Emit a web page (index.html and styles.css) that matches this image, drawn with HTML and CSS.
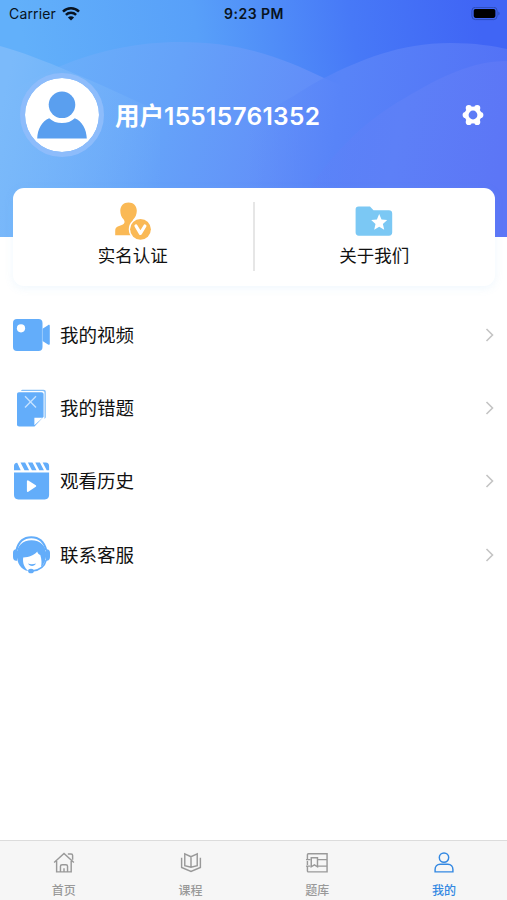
FILE: index.html
```html
<!DOCTYPE html>
<html lang="zh-CN">
<head>
<meta charset="utf-8">
<title>我的</title>
<link rel="stylesheet" href="styles.css">
</head>
<body>
<div class="app">
  <header class="hero">
    <svg class="waves" viewBox="0 0 507 237" preserveAspectRatio="none">
      <defs>
        <linearGradient id="sky" gradientUnits="userSpaceOnUse" x1="30" y1="90" x2="480" y2="20"><stop offset="0" stop-color="#62b0fa"/><stop offset=".38" stop-color="#58a0f9"/><stop offset=".72" stop-color="#4779f7"/><stop offset="1" stop-color="#4065f5"/></linearGradient>
        <linearGradient id="hill" gradientUnits="userSpaceOnUse" x1="0" y1="120" x2="340" y2="210"><stop offset="0" stop-color="#6cb3fa"/><stop offset=".45" stop-color="#65a2f9"/><stop offset="1" stop-color="#6085f8"/></linearGradient>
        <linearGradient id="right" gradientUnits="userSpaceOnUse" x1="250" y1="110" x2="500" y2="140"><stop offset="0" stop-color="#5c8cf9" stop-opacity="0"/><stop offset=".35" stop-color="#5884f8"/><stop offset="1" stop-color="#5372f6"/></linearGradient>
        <linearGradient id="front" gradientUnits="userSpaceOnUse" x1="290" y1="130" x2="500" y2="170"><stop offset="0" stop-color="#5f82f7" stop-opacity="0"/><stop offset=".5" stop-color="#5d80f7"/><stop offset="1" stop-color="#5c76f6"/></linearGradient>
        <linearGradient id="left" gradientUnits="userSpaceOnUse" x1="0" y1="110" x2="170" y2="150"><stop offset="0" stop-color="#7bbafa"/><stop offset="1" stop-color="#7bb4fa" stop-opacity="0"/></linearGradient>
      </defs>
      <path fill="url(#sky)" d="M0 0h507v237H0z"/>
      <path fill="url(#hill)" d="M0 100C30 78 94 42 180 42C245 42 286 60 324 78C350 90 375 96 405 98L507 120V237H0Z"/>
      <path fill="url(#right)" d="M250 120C290 100 306 87 324 78C360 60 400 43 450 43C475 43 494 46 507 49V237H250Z"/>
      <path fill="url(#front)" d="M280 237C320 160 365 120 405 98C440 77 472 61 507 61V237Z"/>
      <path fill="url(#left)" d="M0 46C40 57 95 82 160 112V237H0Z"/>
    </svg>
    <div class="status">
      <div class="carrier"><span>Carrier</span>
        <svg width="18" height="14" viewBox="0 0 18 14" fill="none" stroke="#081321" stroke-width="2.5"><path d="M1 4.600C5.500.2 12.500.2 17 4.600M3.900 7.900c2.900-2.800 7.300-2.800 10.200 0"/><path fill="#081321" stroke="none" d="M5.900 10.500c1.800-1.700 4.400-1.700 6.200 0L9 13.500z"/></svg>
      </div>
      <div class="clock">9:23 PM</div>
      <svg class="battery" width="30" height="14" viewBox="0 0 30 14"><rect x=".9" y=".3" width="25.200" height="12.300" rx="3.500" fill="none" stroke="#2c4cb4" stroke-width="1"/><rect x="2.700" y="2" width="21.700" height="8.900" rx="1.800"/><path d="M27.400 4.500c1.500.7 1.500 3.200 0 4z" fill="#2c4cb4"/></svg>
    </div>
    <div class="profile">
      <div class="avatar"><svg width="50" height="48" viewBox="0 0 50 48" fill="#5a9fef"><circle cx="25" cy="13.800" r="13.300"/><path d="M12.200 27.200C15.500 30.400 20 32.100 25 32.100s9.500-1.700 12.800-4.900C45 30.200 49.500 38 49.800 47.600H.2C.5 38 5 30.200 12.200 27.200z"/></svg></div>
      <div class="name">用户<span class="digits">15515761352</span></div>
      <svg class="gear" width="22" height="22" viewBox="-11 -11 22 22"><g fill="#fff"><circle r="8.600"/><circle cx="7.300" r="3.100"/><circle cx="-7.300" r="3.100"/><circle cx="4.200" cy="7" r="3.100"/><circle cx="-4.200" cy="7" r="3.100"/><circle cx="4.200" cy="-7" r="3.100"/><circle cx="-4.200" cy="-7" r="3.100"/></g><circle r="4.400" fill="#5c7bf6"/></svg>
    </div>
  </header>

  <section class="card">
    <div class="entry">
      <svg width="38" height="38" viewBox="0 0 38 38"><path fill="#fab955" d="M14.500.5c5 0 8.300 3.500 8.300 8.200 0 3.500-1.400 6.700-3.600 8.700-.8 1.600-.2 2.600 1.400 3.300L18 33.200H1.200v-4.300c0-2.400.8-3.800 3.200-4.700l4-1.500c1.900-.8 3-2.700 1.300-5.200C7.500 15.500 6.300 12.300 6.300 8.700 6.300 4 9.500.5 14.500.5z"/><circle cx="26.500" cy="27.300" r="11.700" fill="#fff"/><circle cx="26.500" cy="27.300" r="10.400" fill="#fab955"/><path d="m22 24 4.400 7.400 4.500-7.400" fill="none" stroke="#fff" stroke-width="3.200" stroke-linecap="round" stroke-linejoin="round"/></svg>
      <span>实名认证</span>
    </div>
    <div class="entry">
      <svg width="38" height="38" viewBox="0 0 38 38"><path fill="#7bc8f4" d="M3.500 4.500H15l3.500 3.800H34c2 0 3.200 1.200 3.200 3.200v19c0 2-1.200 3.200-3.200 3.200H3.800c-2 0-3.200-1.200-3.200-3.200v-23c0-1.800 1-3 2.900-3z"/><path fill="#fff" d="m24.200 12.100 2.300 5.400 5.700.5-4.300 3.900 1.300 5.800-5-3-5 3 1.300-5.800-4.300-3.900 5.700-.5z"/></svg>
      <span>关于我们</span>
    </div>
  </section>

  <nav class="menu">
    <a class="row">
      <svg class="pic" width="38" height="38" viewBox="0 0 38 38"><path fill="#63adfa" d="M4 3h21.500c2.700 0 4 1.300 4 4v5.700l5.500-3.500c1.100-.7 1.800-.3 1.800 1v17.300c0 1.300-.7 1.700-1.800 1L29.500 25v6c0 2.700-1.300 4-4 4H4c-2.700 0-4-1.300-4-4V7c0-2.700 1.300-4 4-4z"/><path d="M29.400 12v14" stroke="#b5d8fd" stroke-width=".7"/><circle cx="8" cy="12.300" r="4.100" fill="#fff"/></svg>
      <span>我的视频</span><svg class="chev" width="10" height="14" viewBox="0 0 10 14"><path d="m1.500 1 6 6-6 6"/></svg>
    </a>
    <a class="row">
      <svg class="pic" width="38" height="38" viewBox="0 0 38 38"><path fill="#85bff8" d="M10 .8h20.500c1.500 0 2.300.8 2.300 2.300v25.500l-1.300 1.300V4c0-1.200-.6-1.900-1.800-1.900H8C8.200 1.200 8.900.8 10 .8z"/><path fill="#63adfa" d="M6 3.300h22.300c1.500 0 2.300.8 2.300 2.200v22.200L21.500 37.500H6.200c-1.400 0-2.200-.8-2.200-2.200V5.500C4 4.100 4.700 3.300 6 3.300z"/><path fill="#fff" d="M21.400 28.700h8.200L21.400 36.200z"/><path d="m12 7.200 11 11.300M23 7.200 12 18.500" fill="none" stroke="#c5e2ff" stroke-width="1.400"/></svg>
      <span>我的错题</span><svg class="chev" width="10" height="14" viewBox="0 0 10 14"><path d="m1.500 1 6 6-6 6"/></svg>
    </a>
    <a class="row">
      <svg class="pic" width="38" height="38" viewBox="0 0 38 38"><path fill="#63adfa" d="M4.200.8 7.700 8.200H1V4C1 2.200 2 1.100 4.200.8zM7.500.5h4.600l4 7.700h-4.600zM14.900.5h4.600l4 7.700h-4.600zM22.300.5h4.600l4 7.700h-4.600zM29.700.5h3c2.200 0 3.400 1.200 3.400 3.500v4.200h-2.400zM1 10.500h35.100v22.600c0 2.800-1.500 4.300-4.300 4.300H5.300C2.500 37.400 1 35.900 1 33.100z"/><path fill="#fff" stroke="#fff" stroke-width="1.800" stroke-linejoin="round" d="M14.800 19.200v9.800l7.500-4.900z"/></svg>
      <span>观看历史</span><svg class="chev" width="10" height="14" viewBox="0 0 10 14"><path d="m1.500 1 6 6-6 6"/></svg>
    </a>
    <a class="row">
      <svg class="pic" width="38" height="38" viewBox="0 0 38 38"><path fill="none" stroke="#63adfa" stroke-width="2" d="M3.500 14C5.600 5.500 11.200 1.300 18.300 1.300S31 5.500 33.200 14"/><path fill="#63adfa" d="M4 13.200v11.500H3.200c-2 0-3.200-1.500-3.200-3.700v-4.200c0-2.200 1.200-3.600 3.200-3.600zM33 13.200h.8c2 0 3.200 1.400 3.200 3.600V21c0 2.200-1.200 3.700-3.200 3.700H33zM3.800 18.500C3.800 10.300 9.600 4.300 18.500 4.300S33.200 10.300 33.200 18.500c0 5.500-2 9.500-5.200 12.300.9-3.500.7-7.500-.7-11.800-1.500-.5-2.700-1.700-3.100-3.500-3.200 4-7.900 5.600-14 6.100-.7 5.300.8 10 5.300 13.500C8.200 34 3.800 27.500 3.800 18.500z"/><path d="M33.200 24c-1.500 6-5.800 10.200-14 11" fill="none" stroke="#63adfa" stroke-width="1.600"/><ellipse cx="18" cy="35" rx="2.900" ry="2.300" fill="#63adfa"/><path d="M15 27.500c2 1.100 5.500 1.100 8 0-1.400 3.200-6.500 3.200-8 0z" fill="#63adfa"/></svg>
      <span>联系客服</span><svg class="chev" width="10" height="14" viewBox="0 0 10 14"><path d="m1.500 1 6 6-6 6"/></svg>
    </a>
  </nav>

  <footer class="tabs">
    <a class="tab"><svg width="24" height="24" viewBox="0 0 24 24"><path d="M1.700 12 12 2.500l10.300 9.500M4.300 10.500v11.300h15.200V10.500M8.300 21.500V16c0-1.100.6-1.700 1.700-1.700h4c1.100 0 1.700.6 1.700 1.700v5.500M12 18v3.500M16 3.200h3.500c1 0 1.500.5 1.500 1.500v4.500"/></svg><span>首页</span></a>
    <a class="tab"><svg width="24" height="24" viewBox="0 0 24 24"><path d="M12 6 5.500 3v12.300L12 17l6.500-1.700V3zM12 6v11M2.200 7v10.200L12 21.300l9.800-4.100V7"/></svg><span>课程</span></a>
    <a class="tab"><svg width="24" height="24" viewBox="0 0 24 24"><path d="M2 8.500V3.800c0-.7.300-1 1-1h19.500v19H3c-.7 0-1-.3-1-1V16.500M2 10.500v4M.5 9H5M.5 15.800H5M6 7h6.500v9.500l-3.200-2L6 16.500zM12.500 9h10M12.500 15.800h10"/></svg><span>题库</span></a>
    <a class="tab active"><svg width="24" height="24" viewBox="0 0 24 24"><circle cx="12" cy="6.900" r="4.900"/><path d="M8 13.800h8c3.300 0 5.300 2.500 5.300 5.500v2.500H2.700v-2.500c0-3 2-5.500 5.300-5.500z"/></svg><span>我的</span></a>
  </footer>
</div>
</body>
</html>
```
FILE: styles.css
```css
* { box-sizing: border-box; }

body {
  margin: 0;
  background: #fff;
  color: #111;
  font-family: Inter, "Noto Sans CJK SC", sans-serif;
}

.app {
  display: flex;
  flex-direction: column;
  height: 900px;
  overflow: hidden;
}

.hero {
  position: relative;
  flex: none;
  height: 237px;
}

.waves {
  position: absolute;
  inset: 0;
  width: 100%;
  height: 100%;
}

.status {
  position: relative;
  display: grid;
  grid-template-columns: 1fr auto 1fr;
  align-items: center;
  height: 27px;
  padding: 0 6px 0 9px;
  font-size: 14px;
  color: #081321;
}

.carrier {
  display: flex;
  align-items: center;
  gap: 6px;
  letter-spacing: 0.15px;
}

.clock {
  margin-right: 2px;
  font-weight: 600;
  letter-spacing: 0.5px;
}

.battery { justify-self: end; }

.profile {
  position: relative;
  display: flex;
  align-items: center;
  height: 86px;
  margin-top: 45px;
  padding: 0 23px 0 20px;
}

.avatar {
  display: flex;
  justify-content: center;
  align-items: center;
  width: 84px;
  height: 84px;
  border: 5px solid #8dbcfb;
  border-radius: 50%;
  background: #fff;
  background-clip: padding-box;
}

.name {
  flex: 1;
  margin: 2px 0 0 11px;
  color: #fff;
  font-size: 24.5px;
  font-weight: 600;
  line-height: 36px;
}

.digits { letter-spacing: 0.3px; }

.card {
  position: relative;
  display: flex;
  flex: none;
  height: 98px;
  margin: -49px 12px 0 13px;
  border-radius: 11px;
  background: #fff;
  box-shadow: 0 2px 10px rgba(100, 180, 240, 0.1);
}

.entry {
  display: flex;
  flex: 1;
  flex-direction: column;
  align-items: center;
  height: 69px;
  margin-top: 14px;
  font-size: 17.5px;
  line-height: 26px;
}

.entry + .entry {
  padding-right: 1px;
  border-left: 2px solid #e6e6e6;
}

.entry span { margin-top: 3px; }

.menu {
  flex: 1;
  padding: 12px 12px 0 13px;
}

.row {
  display: flex;
  align-items: center;
  height: 73.3px;
  font-size: 18.5px;
}

.row span {
  flex: 1;
  margin: -2px 0 0 9px;
}

.chev {
  fill: none;
  stroke: #c4c4c4;
  stroke-width: 1.6;
}

.tabs {
  display: flex;
  flex: none;
  height: 60px;
  border-top: 1px solid #dcdcdc;
  background: #f6f6f6;
}

.tab {
  display: flex;
  flex: 1;
  flex-direction: column;
  align-items: center;
  padding: 10px 0 0 1px;
  color: #999;
  font-size: 12px;
  font-weight: 500;
  line-height: 18px;
}

.tab svg {
  fill: none;
  stroke: currentColor;
  stroke-width: 1.5;
}

.tab span { margin-top: 8px; }

.active { color: #3388e2; }
```
